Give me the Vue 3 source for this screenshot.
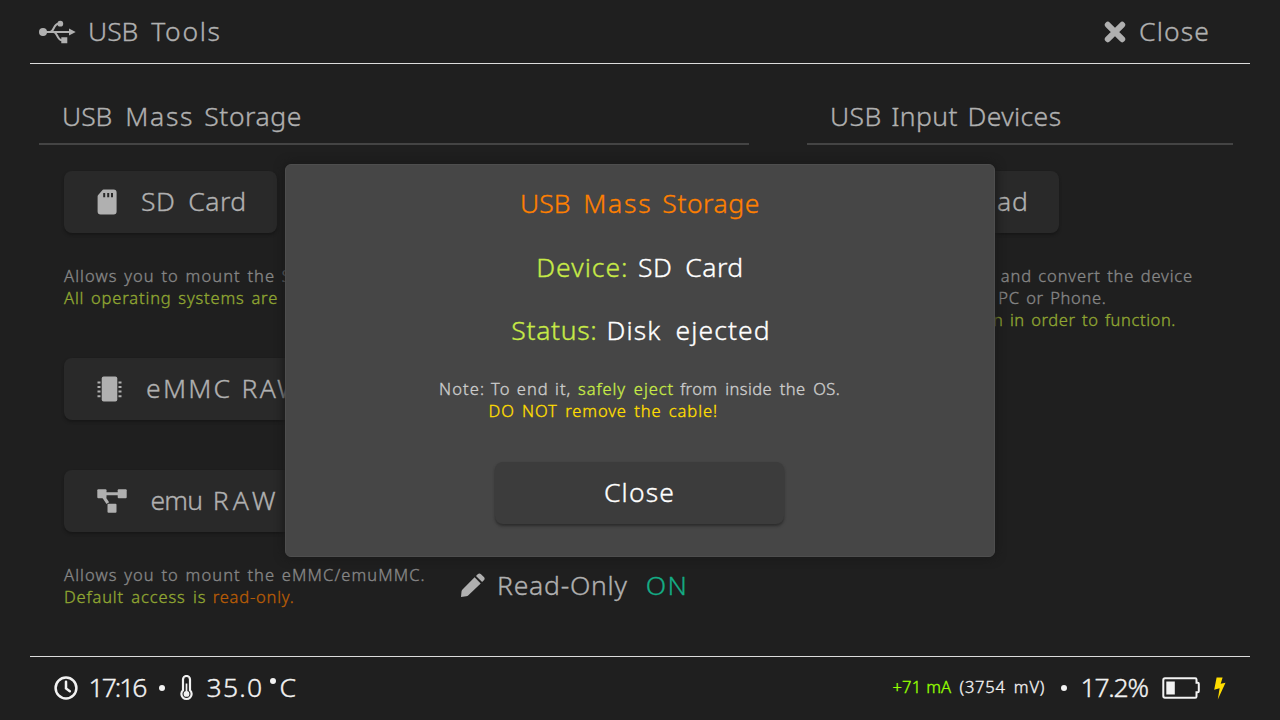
<script setup>
</script>

<template>
  <div class="screen">
    <header class="topbar">
      <div class="title">
        <svg class="ico-usb" width="37" height="24" viewBox="0 0 37 24">
          <g fill="none" stroke="currentColor" stroke-width="2">
            <path d="M4 12h27" />
            <path d="M11 12c4 0 3.500-8.300 8.500-8.300h2M14.500 12c4 0 3.500 8.300 8.500 8.300h1.500" />
          </g>
          <circle cx="4" cy="12" r="4" fill="currentColor" />
          <circle cx="21.300" cy="3.700" r="2.900" fill="currentColor" />
          <path d="M30 8.400l6.700 3.600-6.700 3.600zM22.300 17.200h6v6h-6z" fill="currentColor" />
        </svg>
        <span class="t-tools"><span class="usb">USB </span>Tools</span>
      </div>
      <div class="close-top">
        <svg width="22" height="22" viewBox="0 0 22 22"><path d="M3.800 3.800l14.400 14.400M18.200 3.800l-14.400 14.400" stroke="currentColor" stroke-width="6" stroke-linecap="round" /></svg>
        <span class="t-close">Close</span>
      </div>
    </header>

    <main class="body">
      <section class="col storage">
        <h2 class="t-mass"><span class="usb">USB </span><span class="mass">Mass </span>Storage</h2>
        <div class="btn sd">
          <svg width="20" height="26" viewBox="0 0 20 26"><path fill="currentColor" fill-rule="evenodd" d="M6.600.6H16.600a3 3 0 0 1 3 3V22.400a3 3 0 0 1-3 3H3.600a3 3 0 0 1-3-3V7.400q0-1 .8-1.700l3.700-4.300q.6-.8 1.500-.8zM6.200 4v4.200h2V4zM10.200 4v4.200h2V4zM14 4v4.200h2V4z" /></svg>
          <span class="t-card">SD Card</span>
        </div>
        <div class="small sd-note"><span class="t-allows">Allows you to mount the SD Card.</span><br /><span class="green t-all">All operating systems are supported.</span></div>
        <div class="btn emmc">
          <svg width="25" height="26" viewBox="0 0 25 26" fill="currentColor">
            <rect x="4.700" y="0.500" width="15.600" height="25" rx="2" />
            <path d="M.5 5.500h3v2h-3zM.5 10h3v2h-3zM.5 14.600h3v2h-3zM.5 19.200h3v2h-3zM21.500 5.500h3v2h-3zM21.500 10h3v2h-3zM21.500 14.600h3v2h-3zM21.500 19.200h3v2h-3z" />
          </svg>
          <span class="t-emmc">eMMC RAW GPP</span>
        </div>
        <div class="btn emu">
          <svg width="30" height="24" viewBox="0 0 30 24" fill="currentColor">
            <rect x="0.300" y="0.300" width="9.200" height="9" rx="1" /><rect x="20.700" y="0.300" width="9" height="9" rx="1" /><rect x="10.500" y="14.700" width="9" height="9" rx="1" />
            <path d="M9 3.300h12v2.900H9zM5.500 9l2.600-1.700 4 6-2.600 1.600z" />
          </svg>
          <span class="t-emu"><span class="emu-word">emu </span>RAW GPP</span>
        </div>
        <div class="access">
          <div class="small"><span class="t-allows">Allows you to mount the eMMC/emuMMC.</span><br /><span class="green t-default">Default access is</span><span class="rust t-ro">read-only.</span></div>
          <div class="readonly">
            <svg width="24" height="24" viewBox="0 0 24 24" fill="currentColor"><path d="M13.600 4.300l6.100 6.100L7.400 22.300Q6.500 23.200 5.200 23.300L0 24l.5-5.600q.1-1.100 1-2zM15 2.900l1.700-1.700q1.700-1.600 3.300 0l2.900 2.900q1.500 1.600 0 3.200l-1.800 1.700z" /></svg>
            <span class="t-readonly">Read-Only</span><span class="teal t-on">ON</span>
          </div>
        </div>
      </section>

      <section class="col input">
        <h2 class="t-input">USB Input Devices</h2>
        <div class="btn pad"><span class="t-pad">Gamepad</span></div>
        <div class="small pad-note">
          <div class="r1">Plug-in the Joy-Con and convert the device</div>
          <div class="r2">into a gamepad for PC or Phone.</div>
          <div class="r3 green">Needs both Joy-Con in order to function.</div>
        </div>
      </section>
    </main>

    <footer class="statusbar">
      <div class="left">
        <svg width="24" height="24" viewBox="0 0 24 24" fill="none" stroke="currentColor" stroke-width="2.500"><circle cx="12" cy="12" r="10.400" /><path d="M12 5.800v6.600l3.800 2.800" stroke-linecap="round" /></svg>
        <span class="t-time">17:16</span>
        <i class="dot"></i>
        <svg class="thermo" width="13" height="26" viewBox="0 0 13 26"><path d="M3 4.500a3.500 3.500 0 0 1 7 0v10.700a5.100 5.100 0 1 1-7 0z" fill="none" stroke="currentColor" stroke-width="2.200" /><circle cx="6.500" cy="18.900" r="2.900" fill="currentColor" /><path d="M6.500 8.500v10" stroke="currentColor" stroke-width="1.700" /></svg>
        <span class="t-temp">35.0</span>
        <span class="t-deg"><i class="degree"></i>C</span>
      </div>
      <div class="right">
        <span class="lime t-ma">+71 mA</span>
        <span class="t-mv">(3754 mV)</span>
        <i class="dot"></i>
        <span class="t-pct">17.2%</span>
        <svg class="battery" width="38" height="22" viewBox="0 0 38 22"><path d="M3 1.300h30.200q1.300 0 1.300 1.300v3.200h1.300q1 0 1 1v7.400q0 1-1 1h-1.300v4.200q0 1.300-1.300 1.300H3q-1.700 0-1.700-1.700V3q0-1.700 1.700-1.700z" fill="none" stroke="currentColor" stroke-width="2" /><path d="M4.300 4.500h8.500v13H4.300z" fill="currentColor" /></svg>
        <svg class="bolt" width="13" height="23" viewBox="0 0 13 23"><path d="M3.600.5h6L7.700 6.800l4.800-1L4.800 22.500l1.800-11.300-5.400 1.500z" fill="currentColor" /></svg>
      </div>
    </footer>

    <div class="modal">
      <div class="m-title t-mass"><span class="usb">USB </span><span class="mass">Mass </span>Storage</div>
      <div class="m-line device"><span class="mgreen t-device">Device:</span><span class="t-card">SD Card</span></div>
      <div class="m-line status"><span class="mgreen t-status">Status:</span><span class="t-disk">Disk ejected</span></div>
      <div class="m-note">
        <div class="n1"><span class="t-note">Note: To end it,</span><span class="mgreen t-safely">safely eject</span><span class="t-from">from inside the OS.</span></div>
        <div class="n2">DO NOT remove the cable!</div>
      </div>
      <div class="m-btn"><span class="t-close">Close</span></div>
    </div>
  </div>
</template>

<style>
body { background: #1f1f1f; }
</style>

<style scoped>
.screen { position: relative; width: 1280px; height: 720px; box-sizing: border-box; padding: 0 30px; overflow: hidden; display: flex; flex-direction: column; background: #1f1f1f; color: #b0b0b0; font: 350 26.5px/32px "Noto Sans", sans-serif; white-space: nowrap; -webkit-text-stroke: .35px currentColor; }
svg { display: block; flex: none; }
span { white-space: nowrap; }
.topbar { height: 63px; flex: none; border-bottom: 1px solid #dcdcdc; display: flex; justify-content: space-between; padding: 0 9px; }
.title, .close-top { display: flex; align-items: center; height: 62px; }
.ico-usb { margin-top: 1px; }
.close-top { width: 137px; padding-top: 1px; }
.close-top > span { margin: -3px 0 0 13px; }
.title > span { margin-left: 12px; }
.usb { letter-spacing: 0; word-spacing: 6px; }
.mass { letter-spacing: 1.700px; word-spacing: 1.500px; }
.t-tools { letter-spacing: 1.650px; }
.t-close { letter-spacing: 1.140px; }
.t-mass { letter-spacing: .55px; }
.t-input { letter-spacing: .4px; word-spacing: 2.300px; }
.t-card { letter-spacing: .5px; word-spacing: 5.500px; }
.t-emmc { letter-spacing: 2.250px; }
.t-emu { letter-spacing: 4px; }
.emu-word { letter-spacing: -.8px; word-spacing: 4.500px; }
.t-pad { letter-spacing: 1px; }
.body { flex: 1; display: grid; grid-template-columns: 710px 426px; column-gap: 58px; padding: 36px 9px 0; align-items: start; }
h2 { margin: 0; font: inherit; height: 43px; border-bottom: 2px solid #444; padding-left: 23px; }
.btn { height: 62px; box-sizing: border-box; margin-left: 25px; border-radius: 8px; background: #292929; box-shadow: 0 2px 3px #171717; display: flex; align-items: center; padding-left: 33px; }
.btn > span { margin-top: -3px; }
.sd { width: 213px; margin-top: 26px; }
.sd .t-card { margin-left: 24px; }
.small { font-size: 16.500px; line-height: 22px; color: #868686; }
.sd-note { margin: 32px 0 0 25px; }
.t-allows { letter-spacing: 1.100px; word-spacing: 1.200px; }
.t-all { letter-spacing: .85px; word-spacing: 1.600px; }
.t-default { letter-spacing: .85px; word-spacing: 2.200px; }
.t-ro { letter-spacing: .8px; margin-left: 6.500px; }
.green { color: #90a632; }
.rust { color: #b75c06; }
.teal { color: #14ad86; }
.emmc { width: 290px; margin-top: 49px; }
.emmc .t-emmc { margin-left: 24px; }
.emu { width: 290px; margin-top: 50px; }
.emu .t-emu { margin-left: 23.500px; }
.access { display: flex; margin: 32px 0 0 25px; }
.access .small { width: 397px; }
.readonly { display: flex; align-items: center; height: 32px; margin-top: 5px; }
.readonly span { margin-top: -1px; }
.t-readonly { letter-spacing: .76px; margin-left: 12px; }
.t-on { letter-spacing: 1.500px; margin-left: 18px; }
.pad { width: 227px; margin-top: 26px; justify-content: flex-end; padding-right: 30px; }
.pad-note { width: 361px; margin: 32px 0 0 25px; text-align: right; }
.r1 { letter-spacing: .85px; word-spacing: 1.300px; }
.r2 { letter-spacing: .65px; word-spacing: 1.600px; padding-right: 88.500px; }
.r3 { letter-spacing: .6px; word-spacing: 1.500px; padding-right: 17px; }
.statusbar { height: 63px; flex: none; border-top: 1px solid #dcdcdc; display: flex; justify-content: space-between; padding: 0 24px; color: #f2f2f2; }
.left, .right { display: flex; align-items: center; height: 62px; }
.left > span, .right > span { margin-top: -2px; }
.dot { width: 6px; height: 6px; border-radius: 50%; background: #f2f2f2; flex: none; }
.t-time { letter-spacing: -2px; width: 67.500px; margin-left: 10.500px; }
.left .dot { margin-left: 3px; }
.thermo { margin-left: 14.500px; }
.t-temp { letter-spacing: 1.260px; margin-left: 14px; width: 61px; }
.t-deg { position: relative; padding-left: 12px; }
.degree { position: absolute; left: 2px; top: 7px; width: 6px; height: 6px; border-radius: 50%; background: #f2f2f2; }
.t-ma, .t-mv { font-size: 16.500px; }
.t-ma { letter-spacing: .2px; word-spacing: .3px; width: 67px; }
.t-mv { letter-spacing: .8px; word-spacing: 3px; width: 101px; }
.t-pct { letter-spacing: -1.220px; margin-left: 14px; width: 81px; }
.right { width: 333.500px; }
.lime { color: #96ff00; }
.bolt { margin-left: 13.500px; color: #ffdd00; }
.modal { position: absolute; left: 285px; top: 164px; width: 710px; height: 393px; box-sizing: border-box; border: 1px solid #4e4e4e; border-radius: 6px; background: #464646; box-shadow: 0 0 8px 2px #1a1a1a; color: #fff; padding-top: 22px; }
.m-title { color: #ff8000; text-align: center; height: 64px; }
.m-line { height: 63px; display: flex; justify-content: center; }
.mgreen { color: #c7ea46; }
.t-device { letter-spacing: 1px; margin-right: 9.500px; }
.t-status { letter-spacing: .7px; margin-right: 9px; }
.status { padding-left: 2px; }
.t-disk { letter-spacing: 1.100px; word-spacing: 6px; }
.m-note { font-size: 16.500px; line-height: 22px; color: #ccc; height: 84px; padding-top: 1px; box-sizing: border-box; }
.n1 { display: flex; margin-left: 153px; }
.t-note { letter-spacing: 1.100px; word-spacing: .7px; margin-right: 6.500px; }
.t-safely { letter-spacing: .95px; word-spacing: 2.600px; margin-right: 6px; }
.t-from { letter-spacing: .4px; word-spacing: 3.100px; }
.n2 { margin-left: 202.500px; color: #ffdd00; letter-spacing: .9px; word-spacing: 2.200px; }
.m-btn { width: 289px; height: 62px; margin: 1px 0 0 209px; border-radius: 8px; background: #3c3c3c; box-shadow: 0 2px 3px #2c2c2c; display: flex; align-items: center; justify-content: center; }
.m-btn span { margin-top: -3px; }
</style>
